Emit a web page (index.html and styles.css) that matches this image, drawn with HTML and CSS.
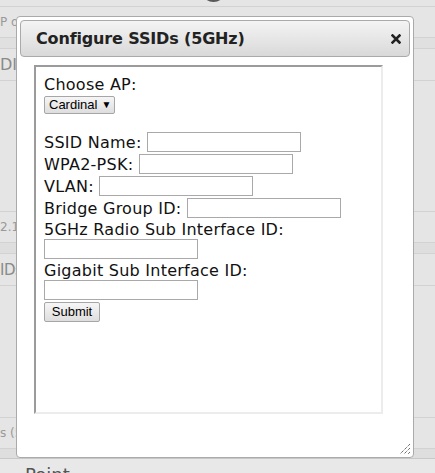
FILE: index.html
```html
<!DOCTYPE html>
<html>
<head>
<meta charset="utf-8">
<link rel="stylesheet" href="styles.css">
</head>
<body>
<div class="page">
  <div class="top"><span class="knob"></span></div>
  <div class="row r1"><span class="bg-small">P o</span></div>
  <div class="band b1"></div>
  <div class="row r2"><span class="bg-big">DII</span></div>
  <div class="spacer s1"></div>
  <div class="row r3"><span class="bg-small">2.1x</span></div>
  <div class="band b2"></div>
  <div class="row r4"><span class="bg-big shift">IDs</span></div>
  <div class="spacer s2"></div>
  <div class="row r5"><span class="bg-small">s (5</span></div>
  <div class="band b3"></div>
  <div class="bottom"><span class="bg-dark">Point</span></div>
</div>

<div class="dialog">
  <div class="titlebar">
    <span class="title">Configure SSIDs (5GHz)</span>
    <svg class="close" width="10" height="10" viewBox="0 0 10 10"><path d="M1.5 1.5 L8.5 8.5 M8.5 1.5 L1.5 8.5" stroke="#222" stroke-width="2.6" stroke-linecap="square"/></svg>
  </div>
  <div class="frame">
    <div class="frame-body">
      <div class="line">Choose AP:</div>
      <div class="sel-row"><span class="select">Cardinal <span class="arrow">▼</span></span></div>
      <div class="line"></div>
      <div class="field">SSID Name: <span class="input"></span></div>
      <div class="field">WPA2-PSK: <span class="input"></span></div>
      <div class="field">VLAN: <span class="input"></span></div>
      <div class="field">Bridge Group ID: <span class="input"></span></div>
      <div class="line">5GHz Radio Sub Interface ID:</div>
      <div class="field"><span class="input"></span></div>
      <div class="line">Gigabit Sub Interface ID:</div>
      <div class="field last"><span class="input"></span></div>
      <div class="btn-row"><span class="button">Submit</span></div>
    </div>
  </div>
  <svg class="grip" width="12" height="12" viewBox="0 0 12 12">
    <path d="M11 1 L1 11 M11 5 L5 11 M11 9 L9 11" stroke="#333" stroke-width="1" stroke-dasharray="1 1" fill="none"/>
  </svg>
</div>
</body>
</html>
```
FILE: styles.css
```css
html, body {
  margin: 0;
  padding: 0;
}
body {
  width: 435px;
  height: 473px;
  overflow: hidden;
  background: #e6e6e6;
  font-family: "DejaVu Sans", Verdana, sans-serif;
  position: relative;
}
.page {
  display: flex;
  flex-direction: column;
  background: #e5e5e5;
}
.top {
  height: 6px;
  border-bottom: 1px solid #d2d2d2;
  position: relative;
  overflow: hidden;
}
.knob {
  position: absolute;
  left: 201px;
  top: -23px;
  width: 25px;
  height: 25px;
  border-radius: 50%;
  background: radial-gradient(circle at 50% 30%, #888, #4a4a4a);
}
.row {
  display: flex;
  align-items: center;
  overflow: hidden;
}
.r1 { height: 30px; border-bottom: 1px solid #d2d2d2; }
.b1 { height: 10px; border-bottom: 1px solid #d2d2d2; background: #e0e0e0; }
.r2 { height: 31px; border-bottom: 1px solid #d2d2d2; }
.s1 { height: 130px; border-bottom: 1px solid #d2d2d2; }
.r3 { height: 30px; border-bottom: 1px solid #d2d2d2; }
.b2 { height: 10px; border-bottom: 1px solid #d2d2d2; background: #dedede; }
.r4 { height: 31px; border-bottom: 1px solid #d2d2d2; }
.s2 { height: 131px; border-bottom: 1px solid #d2d2d2; }
.r5 { height: 30px; border-bottom: 1px solid #d2d2d2; }
.b3 { height: 9px; border-bottom: 1px solid #c8c8c8; background: #dedede; }
.bottom {
  height: 30px;
  background: #e8e8e8;
  padding-left: 25px;
}
.bg-small {
  font-size: 12px;
  color: #999;
}
.bg-big {
  font-size: 16px;
  color: #8a8a8a;
}
.bg-big.shift {
  font-size: 15px;
  letter-spacing: -0.5px;
}
.bg-dark {
  display: block;
  font-size: 18px;
  color: #555;
  margin-top: 5px;
}

.dialog {
  position: absolute;
  left: 16px;
  top: 16px;
  width: 390px;
  height: 434px;
  padding: 3px;
  border: 1px solid #aaa;
  border-radius: 4px;
  background: #fff;
  display: flex;
  flex-direction: column;
}
.titlebar {
  height: 35px;
  border: 1px solid #aaa;
  border-radius: 4px;
  background: linear-gradient(#f4f4f4, #d9d9d9);
  display: flex;
  align-items: center;
  justify-content: space-between;
  padding: 0 8px 0 15px;
  color: #222;
}
.title {
  font-weight: bold;
  font-size: 16px;
  letter-spacing: -0.15px;
}
.close {
  display: block;
}
.frame {
  margin: 8px 0 0 14px;
  width: 345px;
  height: 345px;
  border-style: solid;
  border-width: 2px;
  border-color: #9b9b9b #ececec #ececec #9b9b9b;
  background: #fff;
}
.frame-body {
  padding: 8px;
  font-size: 16px;
  letter-spacing: 0.25px;
  color: #111;
  display: flex;
  flex-direction: column;
}
.line {
  height: 19px;
  line-height: 19px;
  white-space: nowrap;
}
.sel-row {
  height: 19px;
}
.select {
  display: inline-flex;
  align-items: center;
  box-sizing: border-box;
  height: 18px;
  width: 71px;
  padding: 0 0 0 4px;
  border: 1px solid #a6a6a6;
  border-radius: 2px;
  background: linear-gradient(#f6f6f6, #dedede);
  font-family: "Liberation Sans", Arial, sans-serif;
  font-size: 13px;
  letter-spacing: 0;
  color: #000;
}
.arrow {
  font-size: 10px;
  margin-left: 4px;
}
.field {
  height: 20px;
  margin-bottom: 2px;
  display: flex;
  align-items: center;
  white-space: pre;
}
.field.last {
  margin-bottom: 1px;
}
.input {
  display: block;
  box-sizing: border-box;
  width: 154px;
  height: 20px;
  border: 1px solid #a9a9a9;
  background: #fff;
  margin-left: 3px;
}
.field .input:first-child {
  margin-left: 0;
}
.btn-row {
  height: 20px;
}
.button {
  display: inline-flex;
  align-items: center;
  justify-content: center;
  box-sizing: border-box;
  width: 56px;
  height: 20px;
  border: 1px solid #a6a6a6;
  border-radius: 2px;
  background: linear-gradient(#f6f6f6, #dedede);
  font-family: "Liberation Sans", Arial, sans-serif;
  font-size: 13px;
  letter-spacing: 0;
  color: #000;
}
.grip {
  position: absolute;
  right: 2px;
  bottom: 2px;
}
```
